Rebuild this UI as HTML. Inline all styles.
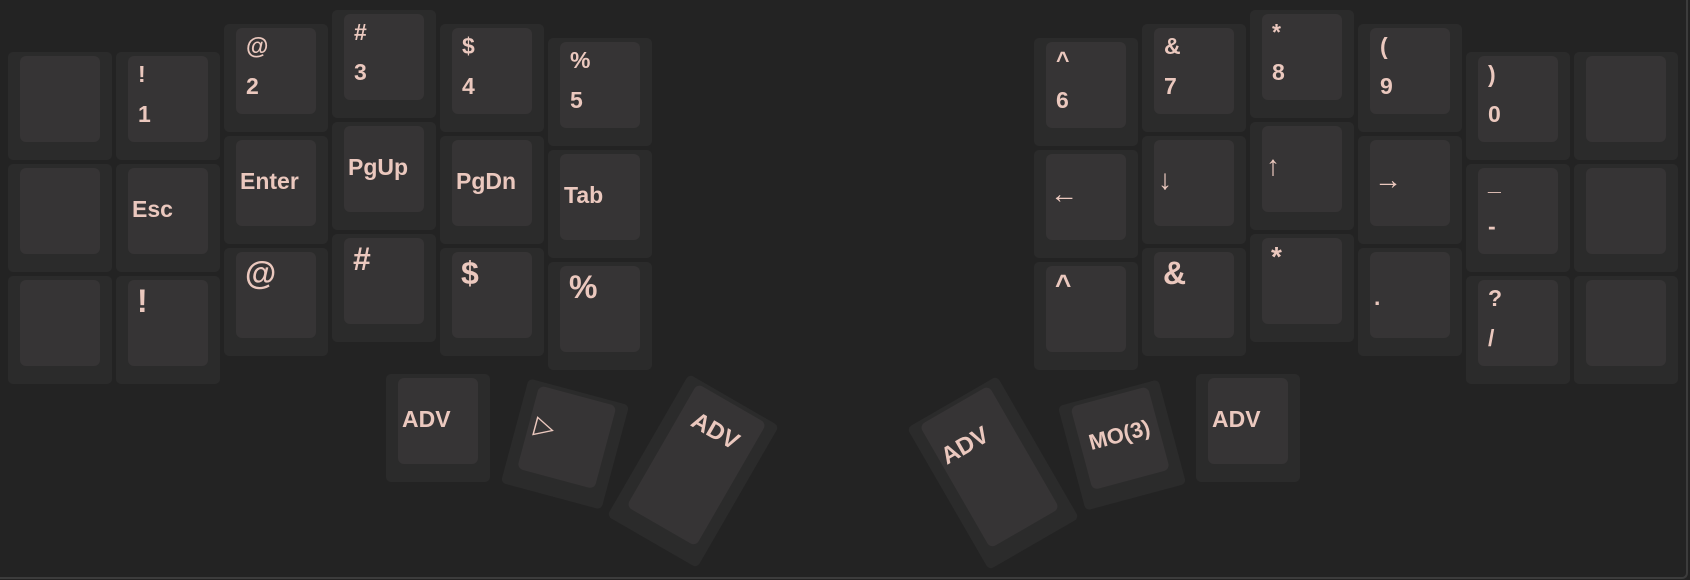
<!DOCTYPE html>
<html><head><meta charset="utf-8">
<style>
html,body{margin:0;padding:0;background:#232323;}
body{width:1690px;height:580px;position:relative;overflow:hidden;font-family:"Liberation Sans",sans-serif;}
.frame{position:absolute;left:0;top:0;width:1686px;height:577px;border-right:2px solid #3c3c3c;border-bottom:2px solid #3c3c3c;border-bottom-right-radius:6px;}
.k{position:absolute;width:104px;height:108px;background:#2b2b2b;border-radius:5px;}
.i{position:absolute;left:12px;top:4px;width:80px;height:86px;background:#363435;border-radius:6px;color:#ebc8be;font-weight:bold;}
.i span{position:absolute;line-height:1;white-space:nowrap;}
.t1{left:10px;top:7px;font-size:23px;}
.t2{left:10px;top:47px;font-size:23px;}
.b{left:9px;top:5px;font-size:32px;}
.m{left:4px;top:30px;font-size:23px;}
.a{left:4px;top:26px;font-size:28px;font-weight:normal;}
.big{height:164px;}
.big .i{height:142px;}
</style></head><body>
<div class="frame"></div>

<div class="k" style="left:8px;top:52px"><div class="i"></div></div>
<div class="k" style="left:8px;top:164px"><div class="i"></div></div>
<div class="k" style="left:8px;top:276px"><div class="i"></div></div>
<div class="k" style="left:116px;top:52px"><div class="i"><span class="t1">!</span><span class="t2">1</span></div></div>
<div class="k" style="left:116px;top:164px"><div class="i"><span class="m">Esc</span></div></div>
<div class="k" style="left:116px;top:276px"><div class="i"><span class="b">!</span></div></div>
<div class="k" style="left:224px;top:24px"><div class="i"><span class="t1">@</span><span class="t2">2</span></div></div>
<div class="k" style="left:224px;top:136px"><div class="i"><span class="m">Enter</span></div></div>
<div class="k" style="left:224px;top:248px"><div class="i"><span class="b">@</span></div></div>
<div class="k" style="left:332px;top:10px"><div class="i"><span class="t1">#</span><span class="t2">3</span></div></div>
<div class="k" style="left:332px;top:122px"><div class="i"><span class="m">PgUp</span></div></div>
<div class="k" style="left:332px;top:234px"><div class="i"><span class="b">#</span></div></div>
<div class="k" style="left:440px;top:24px"><div class="i"><span class="t1">$</span><span class="t2">4</span></div></div>
<div class="k" style="left:440px;top:136px"><div class="i"><span class="m">PgDn</span></div></div>
<div class="k" style="left:440px;top:248px"><div class="i"><span class="b">$</span></div></div>
<div class="k" style="left:548px;top:38px"><div class="i"><span class="t1">%</span><span class="t2">5</span></div></div>
<div class="k" style="left:548px;top:150px"><div class="i"><span class="m">Tab</span></div></div>
<div class="k" style="left:548px;top:262px"><div class="i"><span class="b">%</span></div></div>

<div class="k" style="left:1034px;top:38px"><div class="i"><span class="t1">^</span><span class="t2">6</span></div></div>
<div class="k" style="left:1034px;top:150px"><div class="i"><span class="a">←</span></div></div>
<div class="k" style="left:1034px;top:262px"><div class="i"><span class="b" style="font-size:28px">^</span></div></div>
<div class="k" style="left:1142px;top:24px"><div class="i"><span class="t1">&amp;</span><span class="t2">7</span></div></div>
<div class="k" style="left:1142px;top:136px"><div class="i"><span class="a">↓</span></div></div>
<div class="k" style="left:1142px;top:248px"><div class="i"><span class="b">&amp;</span></div></div>
<div class="k" style="left:1250px;top:10px"><div class="i"><span class="t1">*</span><span class="t2">8</span></div></div>
<div class="k" style="left:1250px;top:122px"><div class="i"><span class="a">↑</span></div></div>
<div class="k" style="left:1250px;top:234px"><div class="i"><span class="b" style="font-size:28px">*</span></div></div>
<div class="k" style="left:1358px;top:24px"><div class="i"><span class="t1">(</span><span class="t2">9</span></div></div>
<div class="k" style="left:1358px;top:136px"><div class="i"><span class="a">→</span></div></div>
<div class="k" style="left:1358px;top:248px"><div class="i"><span class="m" style="top:34px">.</span></div></div>
<div class="k" style="left:1466px;top:52px"><div class="i"><span class="t1">)</span><span class="t2">0</span></div></div>
<div class="k" style="left:1466px;top:164px"><div class="i"><span class="t1" style="top:3px">_</span><span class="t2">-</span></div></div>
<div class="k" style="left:1466px;top:276px"><div class="i"><span class="t1">?</span><span class="t2">/</span></div></div>
<div class="k" style="left:1574px;top:52px"><div class="i"></div></div>
<div class="k" style="left:1574px;top:164px"><div class="i"></div></div>
<div class="k" style="left:1574px;top:276px"><div class="i"></div></div>

<div class="k" style="left:386px;top:374px"><div class="i"><span class="m">ADV</span></div></div>
<div class="k" style="left:513px;top:390px;transform:rotate(15deg)"><div class="i"><span class="a" style="font-size:26px;top:25px;left:6px">▷</span></div></div>
<div class="k big" style="left:641px;top:389px;transform:rotate(30deg)"><div class="i"><span class="m" style="top:21px;left:14px;font-size:24px">ADV</span></div></div>

<div class="k big" style="left:941px;top:391px;transform:rotate(-30deg)"><div class="i"><span class="m" style="top:29px;left:4px;font-size:24px">ADV</span></div></div>
<div class="k" style="left:1070px;top:391px;transform:rotate(-15deg)"><div class="i"><span class="m" style="font-size:22px;left:9px;top:29px">MO(3)</span></div></div>
<div class="k" style="left:1196px;top:374px"><div class="i"><span class="m">ADV</span></div></div>
</body></html>
